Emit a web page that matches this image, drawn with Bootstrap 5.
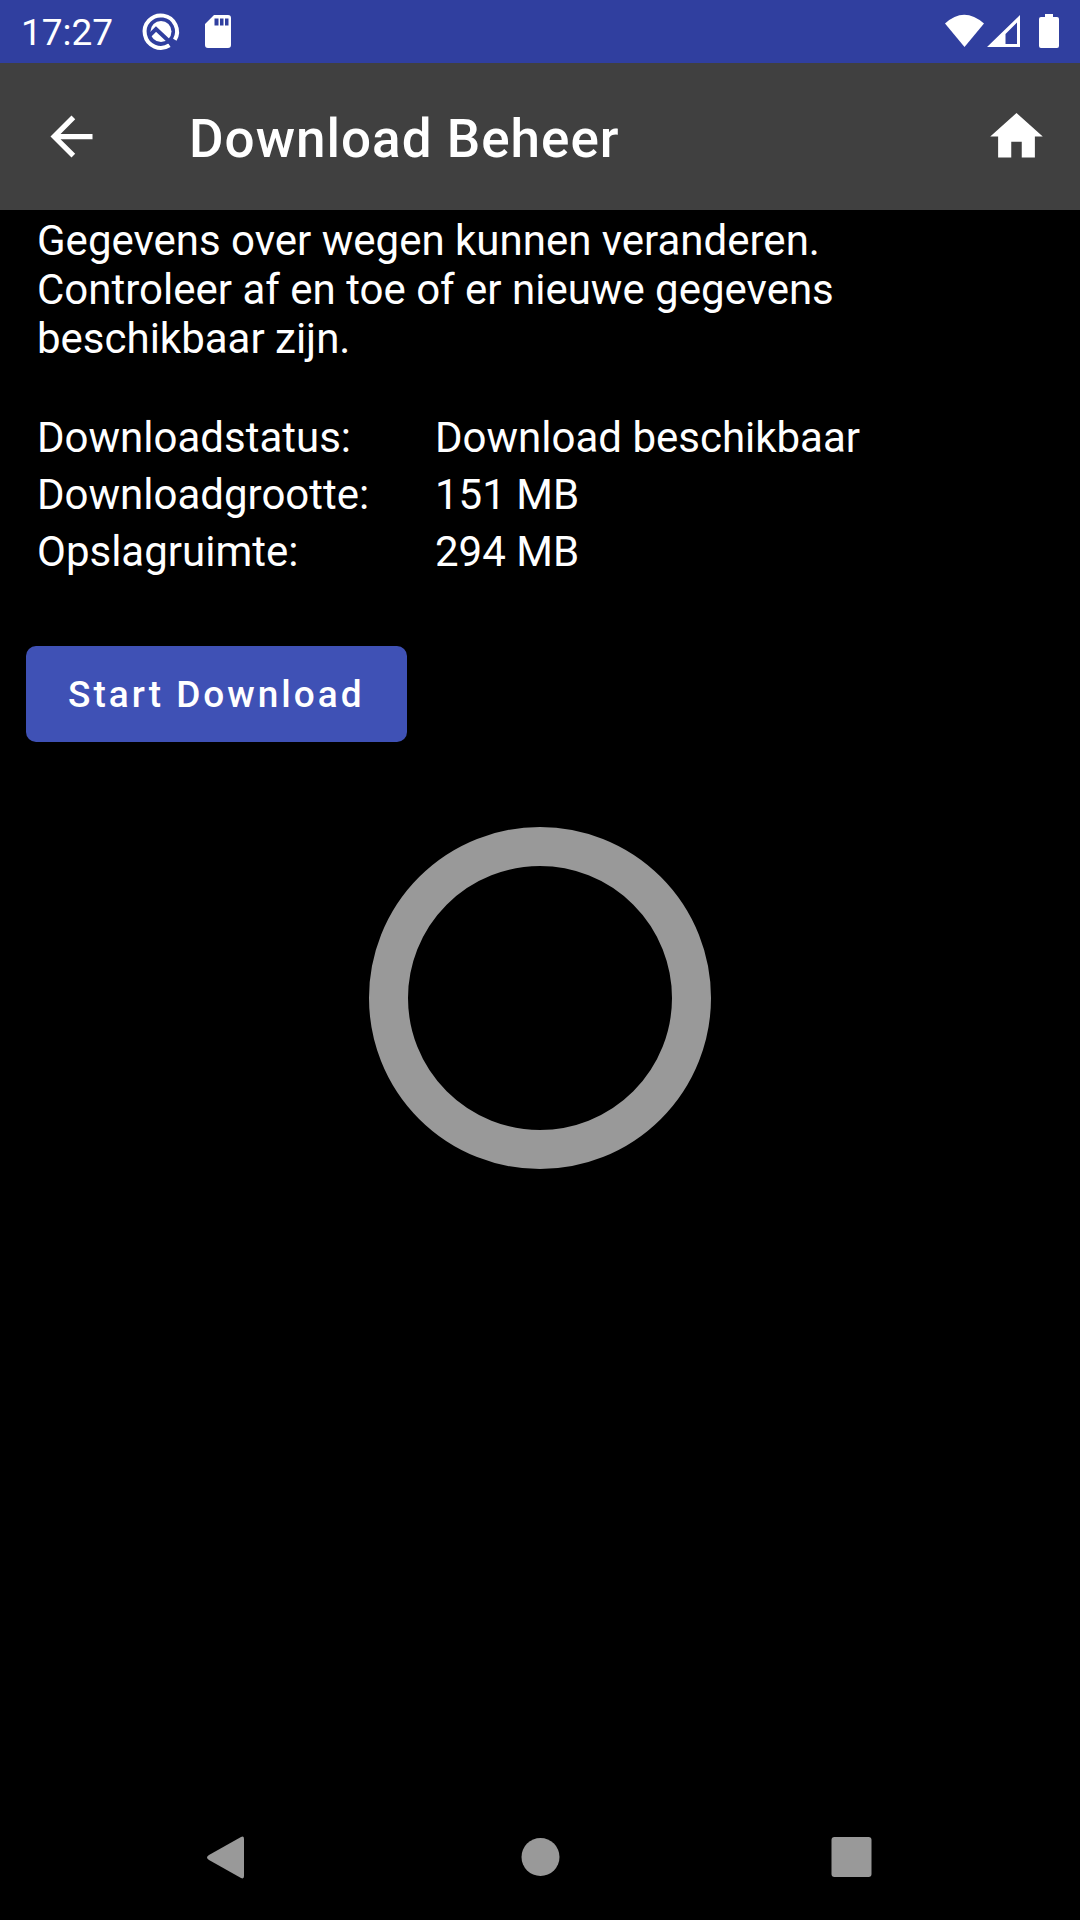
<!DOCTYPE html>
<html lang="nl">
<head>
<meta charset="utf-8">
<meta name="viewport" content="width=device-width, initial-scale=1">
<title>Download Beheer</title>
<link href="https://cdn.jsdelivr.net/npm/bootstrap@5.3.0/dist/css/bootstrap.min.css" rel="stylesheet">
<style>
  body { background: #000; color: #fff; font-family: Roboto, "Noto Sans", sans-serif; font-size: 42px; line-height: 49px; }
  svg { display: block; fill: #fff; }
  .status-strip { background: #303f9f; height: 63px; padding: 0 20px 0 21px; font-size: 37px; }
  .status-strip .clock { padding-top: 2px; }
  .app-header { background: #404040; height: 147px; padding: 0 32px 0 40px; }
  .app-header h1 { font-size: 53px; font-weight: 500; line-height: 62px; letter-spacing: 1px; padding: 4px 0 0 86px; }
  .content-area { padding: 6px 37px 0; }
  .intro { max-width: 850px; margin-bottom: 50px; }
  .facts { display: grid; grid-template-columns: 398px 1fr; row-gap: 8px; margin-bottom: 70px; }
  .btn-start { --bs-btn-bg: #3f51b5; --bs-btn-color: #fff; --bs-btn-hover-bg: #3949ab; --bs-btn-hover-color: #fff; --bs-btn-border-width: 0; --bs-btn-border-radius: 10px; --bs-btn-padding-x: 42px; --bs-btn-font-size: 37px; --bs-btn-font-weight: 500; --bs-btn-line-height: 48px; letter-spacing: 3px; margin-left: -11px; padding-top: 25px; padding-bottom: 23px; }
  .ring { width: 342px; height: 342px; border: 39px solid #999; border-radius: 50%; margin: 85px auto 0; }
  .system-nav { height: 126px; gap: 248px; }
  .system-nav svg { fill: #999; }
  .system-nav .btn { --bs-btn-border-width: 0; }
</style>
</head>
<body>
<div class="d-flex flex-column min-vh-100">
  <div class="status-strip d-flex align-items-center">
    <span class="clock">17:27</span>
    <svg class="ms-4" width="48" height="48" viewBox="0 0 48 48" aria-hidden="true">
      <path fill="none" stroke="#fff" stroke-width="4" d="M32.500 37.300A16.200 16.200 0 1 1 37.800 31.800"/>
      <circle cx="24" cy="23.500" r="10.500"/>
      <path fill="none" stroke="#303f9f" stroke-width="4" d="M12 28l7-7 17 16"/>
    </svg>
    <svg class="ms-2" width="48" height="48" viewBox="0 0 48 48" aria-hidden="true">
      <path fill-rule="evenodd" d="M21 7h14q3 0 3 3v27q0 3-3 3H15q-3 0-3-3V16zM21.500 10.500v7h4v-7zm5.500 0v7h3.500v-7zm5 0v7h3.500v-7z"/>
    </svg>
    <svg class="ms-auto" width="116" height="48" viewBox="0 0 116 48" aria-hidden="true">
      <path d="M1 15.500Q20-2 40 15.500L20.500 39z"/>
      <path fill-rule="evenodd" d="M76 7v32H43zM73 14.500L61.500 26v10H73z"/>
      <path d="M101 6h8v3h4q2 0 2 2v27q0 2-2 2H97q-2 0-2-2V11q0-2 2-2h4z"/>
    </svg>
  </div>

  <header class="app-header d-flex align-items-center">
    <a href="#" aria-label="Terug">
      <svg width="63" height="63" viewBox="0 0 24 24"><path d="M20 11H7.830l5.590-5.590L12 4l-8 8 8 8 1.410-1.410L7.830 13H20v-2z"/></svg>
    </a>
    <h1 class="mb-0">Download Beheer</h1>
    <a href="#" class="ms-auto" aria-label="Startpagina">
      <svg width="63" height="63" viewBox="0 0 24 24"><path d="M10 20v-6h4v6h5v-8h3L12 3 2 12h3v8z"/></svg>
    </a>
  </header>

  <main class="content-area flex-grow-1">
    <p class="intro">Gegevens over wegen kunnen veranderen. Controleer af en toe of er nieuwe gegevens beschikbaar zijn.</p>
    <dl class="facts">
      <dt class="fw-normal">Downloadstatus:</dt><dd class="mb-0">Download beschikbaar</dd>
      <dt class="fw-normal">Downloadgrootte:</dt><dd class="mb-0">151 MB</dd>
      <dt class="fw-normal">Opslagruimte:</dt><dd class="mb-0">294 MB</dd>
    </dl>
    <button type="button" class="btn btn-start d-block">Start Download</button>
    <div class="ring" role="progressbar" aria-label="Voortgang" aria-valuenow="0" aria-valuemin="0" aria-valuemax="100"></div>
  </main>

  <nav class="system-nav d-flex justify-content-center align-items-center" aria-label="Systeemnavigatie">
    <button type="button" class="btn p-0" aria-label="Vorige"><svg width="63" height="63" viewBox="0 0 63 63"><path d="M11 29L43 11q3-1.500 3 2v37q0 3.500-3 2L11 34q-4-2.500 0-5z"/></svg></button>
    <button type="button" class="btn p-0" aria-label="Start"><svg width="63" height="63" viewBox="0 0 63 63"><circle cx="31.500" cy="31" r="19"/></svg></button>
    <button type="button" class="btn p-0" aria-label="Overzicht"><svg width="63" height="63" viewBox="0 0 63 63"><rect x="11.500" y="11" width="40" height="40" rx="3"/></svg></button>
  </nav>
</div>
<script src="https://cdn.jsdelivr.net/npm/bootstrap@5.3.0/dist/js/bootstrap.bundle.min.js"></script>
</body>
</html>
